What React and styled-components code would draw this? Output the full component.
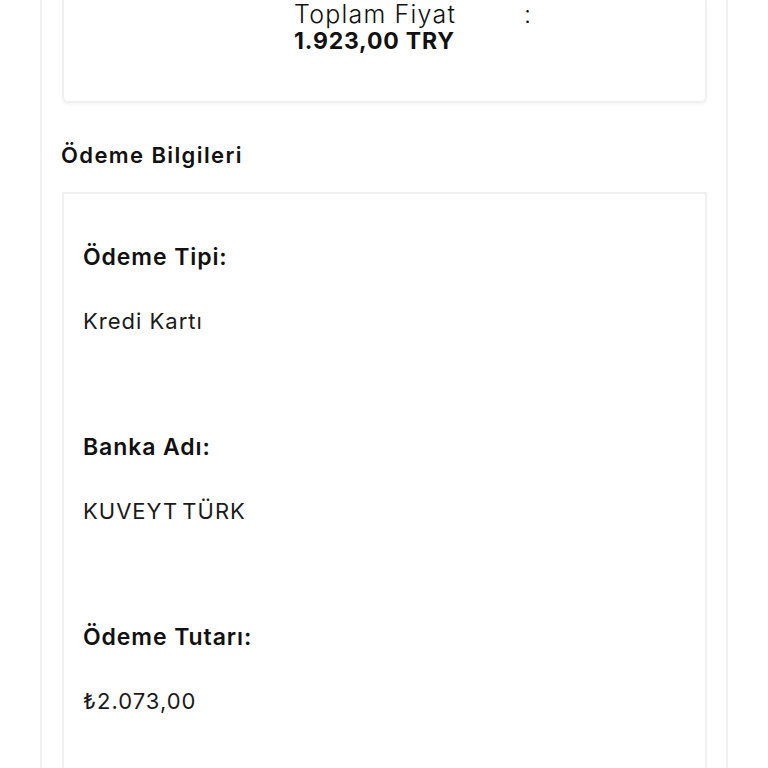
import styled, { createGlobalStyle } from 'styled-components';

const GlobalStyle = createGlobalStyle`
  body {
    margin: 0;
    background: #ffffff;
    font-family: Inter, "Noto Sans", sans-serif;
    color: #111111;
  }
`;

const Page = styled.div`
  padding: 0 40px;
  height: 768px;
  overflow: hidden;
`;

const Panel = styled.div`
  border-left: 2px solid #f1f1f1;
  border-right: 2px solid #f1f1f1;
  padding: 0 19px 0 20px;
  min-height: 768px;
`;

const TopCard = styled.div`
  border: 2px solid #f0f0f0;
  border-top: none;
  border-radius: 0 0 6px 6px;
  box-shadow: 0 2px 3px rgba(0, 0, 0, 0.04);
  padding: 0 0 47px 230px;
`;

const PriceRow = styled.div`
  display: flex;
  height: 28px;
  align-items: center;
  font-size: 25px;
  font-weight: 300;
  letter-spacing: 1.2px;
`;

const PriceLabel = styled.span`
  width: 230px;
`;

const PriceValue = styled.div`
  height: 26px;
  line-height: 26px;
  font-size: 23px;
  font-weight: 700;
  letter-spacing: 0.8px;
`;

const SectionTitle = styled.h2`
  margin: 37px 0 22px -1px;
  height: 30px;
  line-height: 30px;
  font-size: 22px;
  font-weight: 600;
  letter-spacing: 1.4px;
`;

const InfoCard = styled.div`
  border: 2px solid #f0f0f0;
  border-bottom: none;
  padding: 48px 19px 0;
  min-height: 600px;
`;

const Field = styled.div`
  height: 190px;
`;

const FieldLabel = styled.div`
  height: 30px;
  line-height: 30px;
  font-size: 23px;
  font-weight: 600;
  letter-spacing: 0.9px;
  margin-bottom: 34px;
`;

const FieldValue = styled.div`
  height: 30px;
  line-height: 30px;
  font-size: 22px;
  font-weight: 400;
  letter-spacing: 1px;
  word-spacing: ${(p) => (p.$tight ? '-3px' : '0')};
  color: #1a1a1a;
`;

export default function App() {
  const fields = [
    { label: 'Ödeme Tipi:', value: 'Kredi Kartı' },
    { label: 'Banka Adı:', value: 'KUVEYT TÜRK', tight: true },
    { label: 'Ödeme Tutarı:', value: '₺2.073,00' },
  ];

  return (
    <>
      <GlobalStyle />
      <Page>
        <Panel>
          <TopCard>
            <PriceRow>
              <PriceLabel>Toplam Fiyat</PriceLabel>
              <span>:</span>
            </PriceRow>
            <PriceValue>1.923,00 TRY</PriceValue>
          </TopCard>
          <SectionTitle>Ödeme Bilgileri</SectionTitle>
          <InfoCard>
            {fields.map((f) => (
              <Field key={f.label}>
                <FieldLabel>{f.label}</FieldLabel>
                <FieldValue $tight={f.tight}>{f.value}</FieldValue>
              </Field>
            ))}
          </InfoCard>
        </Panel>
      </Page>
    </>
  );
}
